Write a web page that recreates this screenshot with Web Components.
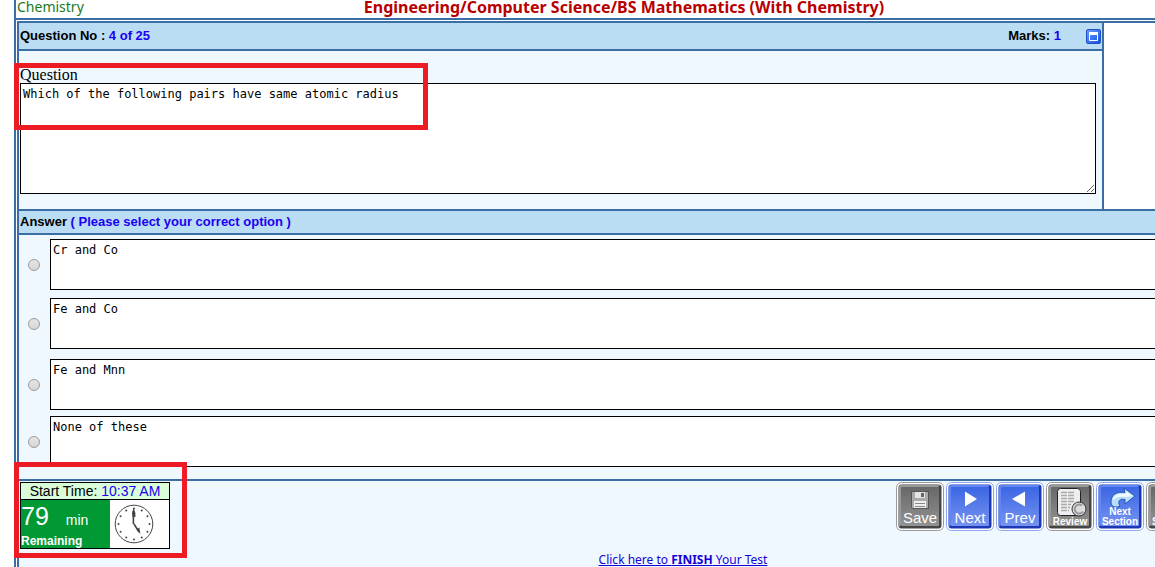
<!DOCTYPE html>
<html lang="en">
<head>
<meta charset="utf-8">
<title>Test: Chemistry</title>
<style>
  body { margin: 0; background: #fff; overflow: hidden; font-family: "Liberation Sans", Arial, sans-serif; }
  html { --line: #3a6ea5; --bar: #bbddf4; --panel: #f0f8ff; --ink: #1a00f0; --mark: #ed1c24; }
</style>
</head>
<body>
<exam-page>
  <exam-header slot="header" subject="Chemistry">Engineering/Computer Science/BS Mathematics (With Chemistry)</exam-header>
  <question-panel number="4 of 25" marks="1" text="Which of the following pairs have same atomic radius"></question-panel>
  <answer-panel>
    <answer-option text="Cr and Co"></answer-option>
    <answer-option text="Fe and Co"></answer-option>
    <answer-option text="Fe and Mnn" class="roomy"></answer-option>
    <answer-option text="None of these"></answer-option>
  </answer-panel>
  <exam-footer>
    <exam-timer slot="timer" start="10:37 AM" minutes="79"></exam-timer>
    <tool-button tone="gray" icon="save">Save</tool-button>
    <tool-button icon="next">Next</tool-button>
    <tool-button icon="prev">Prev</tool-button>
    <tool-button tone="gray" icon="review" size="small">Review</tool-button>
    <tool-button icon="section" size="small">Next<br>Section</tool-button>
    <tool-button tone="gray" icon="back" size="small">Prev<br>Section</tool-button>
  </exam-footer>
</exam-page>

<script>
class Base extends HTMLElement {
  constructor() {
    super();
    this.attachShadow({ mode: 'open' });
  }
  connectedCallback() {
    if (!this.shadowRoot.firstChild) this.shadowRoot.innerHTML = this.render();
  }
  a(name) { return this.getAttribute(name) || ''; }
}

customElements.define('exam-page', class extends Base {
  render() { return `
    <style>
      :host { display: block; margin-left: 14px; min-height: 100vh; overflow: hidden; }
      .sheet { display: flex; flex-direction: column; min-height: 100vh; box-sizing: border-box; width: calc(100% + 192px); border-left: 2px solid var(--line); }
      main { flex: 1; display: flex; flex-direction: column; margin: 1px 0 0 1px; border: solid var(--line); border-width: 2px 0 0 2px; }
    </style>
    <div class="sheet"><slot name="header"></slot><main><slot></slot></main></div>`; }
});

customElements.define('exam-header', class extends Base {
  render() { return `
    <style>
      :host { display: block; border-bottom: 2px solid var(--line); }
      header { display: flex; gap: 280px; height: 18px; line-height: 14px; white-space: nowrap; font-family: "Noto Sans", sans-serif; }
      span { font-size: 14px; color: #1a7a1a; padding-left: 1px; }
      h1 { margin: 0; font: 700 16px/14px "Noto Sans", sans-serif; color: #b80000; }
    </style>
    <header><span>${this.a('subject')}</span><h1><slot></slot></h1></header>`; }
});

customElements.define('question-panel', class extends Base {
  render() { return `
    <style>
      :host { display: block; margin-right: 243px; border-right: 2px solid var(--line); background: var(--panel); }
      .bar { display: flex; align-items: center; height: 26px; padding: 0 1px; background: var(--bar); border-bottom: 2px solid var(--line); font-weight: bold; font-size: 13px; line-height: 26px; }
      .bar span { height: 26px; }
      .bar b { color: var(--ink); }
      .marks { margin-left: auto; }
      .bar button { margin: 1px 0 0 25px; padding: 0; border: 0; background: none; width: 15px; height: 15px; }
      svg { display: block; }
      .body { position: relative; padding: 15px 6px 15px 1px; }
      label { display: block; font: 16px/17px "Liberation Serif", serif; }
      textarea { display: block; box-sizing: border-box; width: 100%; height: 111px; margin: 0; padding: 2px; border: 1px solid #000; border-radius: 0; background: #fff; color: #000; font: 12px/16px "DejaVu Sans Mono", monospace; outline: 0; }
      .mark { position: absolute; left: -5px; top: 12px; width: 414px; height: 67px; box-sizing: border-box; border: 5px solid var(--mark); pointer-events: none; }
    </style>
    <div class="bar">
      <span>Question No : <b>${this.a('number')}</b></span>
      <span class="marks">Marks: <b>${this.a('marks')}</b></span>
      <button type="button" aria-label="Maximize">
        <svg width="15" height="15" viewBox="0 0 15 15"><defs><linearGradient id="g" x2="1" y2="1"><stop stop-color="#6f9cf5"/><stop offset="1" stop-color="#0a50e8"/></linearGradient></defs>
        <rect x=".5" y=".5" width="14" height="14" rx="1.5" fill="url(#g)" stroke="#1f4fc0"/><path d="M3.5 3.5h8v8h-8z" fill="none" stroke="#fff"/><path d="M3 3h9v3H3z" fill="#fff"/></svg>
      </button>
    </div>
    <div class="body">
      <label for="q">Question</label>
      <textarea id="q" readonly>${this.a('text')}</textarea>
      <div class="mark"></div>
    </div>`; }
});

customElements.define('answer-panel', class extends Base {
  render() { return `
    <style>
      :host { display: block; background: var(--panel); border: solid var(--line); border-width: 2px 0; }
      h2 { margin: 0; height: 22px; padding-left: 1px; font: bold 13px/21px "Liberation Sans", sans-serif; background: var(--bar); border-bottom: 2px solid var(--line); }
      h2 span { color: var(--ink); }
      .options { display: flex; flex-direction: column; gap: 6px; padding: 4px 0 10px; }
      ::slotted(*) { margin-bottom: 2px; }
      ::slotted(.roomy) { margin: 2px 0 0; }
    </style>
    <h2>Answer <span>( Please select your correct option )</span></h2>
    <div class="options"><slot></slot></div>`; }
});

customElements.define('answer-option', class extends Base {
  render() { return `
    <style>
      :host { display: flex; align-items: center; }
      input { appearance: none; flex: none; width: 12px; height: 12px; margin: 1px 10px 0 9px; border: 1px solid #9c9c9c; border-radius: 50%; background: linear-gradient(#e6e6e6, #d6d6d6); }
      textarea { display: block; flex: 1; box-sizing: border-box; height: 51px; margin: 0; padding: 2px; border: 1px solid #000; border-radius: 0; background: #fff; color: #000; font: 12px/16px "DejaVu Sans Mono", monospace; resize: none; overflow: hidden; outline: 0; }
    </style>
    <input type="radio" name="answer" aria-label="${this.a('text')}">
    <textarea readonly aria-label="Option">${this.a('text')}</textarea>`; }
});

customElements.define('exam-footer', class extends Base {
  render() { return `
    <style>
      :host { display: block; flex: 1; background: var(--panel); }
      .row { display: flex; justify-content: space-between; align-items: flex-start; padding: 1px 153px 0 1px; }
      .tools { display: flex; gap: 2px; }
      p { margin: 3px 0 0; text-align: center; font: 12px/16px "Noto Sans", sans-serif; }
      a { color: #1400d8; }
    </style>
    <div class="row"><slot name="timer"></slot><div class="tools"><slot></slot></div></div>
    <p><a href="#finish">Click here to <b>FINISH</b> Your Test</a></p>`; }
});

customElements.define('exam-timer', class extends Base {
  render() {
    let ticks = '';
    for (let i = 0; i < 12; i++) {
      const t = i * Math.PI / 6;
      ticks += `<circle cx="${20 + 15.5 * Math.sin(t)}" cy="${20 - 15.5 * Math.cos(t)}" r="1"/>`;
    }
    return `
    <style>
      :host { display: block; position: relative; }
      .box { width: 148px; border: 1px solid #000; background: #fff; }
      .start { height: 16px; border-bottom: 1px solid #000; background: #d9fcd9; font-size: 14px; line-height: 17px; text-align: center; white-space: nowrap; }
      .start span { color: var(--ink); }
      .body { display: flex; height: 48px; }
      .left { width: 89px; background: #093; color: #fff; }
      .left div { display: flex; align-items: baseline; gap: 17px; height: 32px; line-height: 32px; font-size: 14px; }
      .left big { font-size: 25px; }
      .left b { display: block; font-size: 12px; line-height: 18px; }
      svg { display: block; margin: 4px; }
      .mark { position: absolute; left: -6px; top: -20px; width: 173px; height: 96px; box-sizing: border-box; border: 5px solid var(--mark); pointer-events: none; }
    </style>
    <div class="box">
      <div class="start">Start Time: <span>${this.a('start')}</span></div>
      <div class="body">
        <div class="left"><div><big>${this.a('minutes')}</big><span>min</span></div><b>Remaining</b></div>
        <svg width="40" height="40" viewBox="0 0 40 40" fill="#444"><circle cx="20" cy="20" r="18.8" fill="#fff" stroke="#444"/>${ticks}
          <path d="M19.4 20V7M20 20l5 8" stroke="#444" stroke-width="1.6" fill="none"/><path d="M18 9l1.6-5L21.4 9v4h-2.8zM22.4 25.6l3-2 .9 6.4z"/></svg>
      </div>
    </div>
    <div class="mark"></div>`;
  }
});

const ICONS = {
  save: '<path d="M15 9h18v18H17l-2-2z" fill="#555"/><path d="M16 10h16v16H16z" fill="#aaa"/><path d="M19 10h10v6H19z" fill="#e4e4e4"/><path d="M25 11h3v4h-3z" fill="#666"/><path d="M18 19h12v7H18z" fill="#eee"/><path d="M19 21.5h10M19 24.5h10" stroke="#888"/>',
  next: '<path d="M19 9.5v15l12-7.5z" fill="#fff"/>',
  prev: '<path d="M29 9.5v15L16 17z" fill="#fff"/>',
  review: '<rect x="11.5" y="6.5" width="23" height="27" rx="3" fill="#eee" stroke="#222"/><path d="M15 10.5h14M15 13.5h14M15 16.5h14M15 19.5h13M15 22.5h10M15 25.5h9M15 28.5h8" stroke="#aaa" stroke-width="1.5" stroke-dasharray="6 1"/><circle cx="33" cy="27" r="7" fill="#ddd" stroke="#333"/><path d="M36 23.5a4.5 4.5 0 1 0 1 6" fill="none" stroke="#999" stroke-width="2"/>',
  section: '<path d="M15 20C15 12 21 9.5 29 10.5L28 6l11 8-10 8v-4.5c-5-1-8 1-5 7C18 26 15 24 15 20z" fill="#b9defc" stroke="#2358b5"/><path d="M16.5 19c1-6 6-8 13.5-7l-.5-3 7 5-6 1c-6-1-12 0-14 4z" fill="#effaff"/>',
  back: '<path d="M34 20C34 12 28 9.5 20 10.5L21 6l-11 8 10 8v-4.5c5-1 8 1 5 7 6 1.5 9-.5 9-4.5z" fill="#ddd" stroke="#444"/>'
};

customElements.define('tool-button', class extends Base {
  render() {
    const gray = this.a('tone') === 'gray', small = this.a('size') === 'small';
    const [edge, top, low, light, dark] = gray ? ['#999', '#686868', '#929292', '#999', '#454545'] : ['#8da5f3', '#3c66e4', '#7593f0', '#6085f5', '#1c36b4'];
    return `
    <style>
      :host { display: block; }
      button { position: relative; display: block; box-sizing: border-box; width: 48px; height: 49px; margin: 0; padding: 0; border: 0; background: none; }
      svg { display: block; }
      span { position: absolute; left: 0; right: 0; bottom: ${small ? 4 : 6}px; color: #fff; text-align: center; font: ${small ? 'bold 10px/10px' : '15px/15px'} "Liberation Sans", sans-serif; }
    </style>
    <button type="button">
      <svg width="48" height="49" viewBox="0 0 48 49"><defs><linearGradient id="f" x2="0" y2="1"><stop stop-color="${top}"/><stop offset="1" stop-color="${low}"/></linearGradient></defs>
        <rect x=".5" y=".5" width="47" height="48" rx="5" fill="#fff" stroke="${edge}"/>
        <rect x="2.5" y="2.5" width="43" height="44" rx="3" fill="${dark}"/>
        <path d="M3 45V5q0-2 2-2h39l-3 3H6v36z" fill="${light}"/>
        <rect x="5" y="5" width="38" height="39" rx="1" fill="url(#f)"/>${ICONS[this.a('icon')]}</svg>
      <span><slot></slot></span>
    </button>`;
  }
});
</script>
</body>
</html>
